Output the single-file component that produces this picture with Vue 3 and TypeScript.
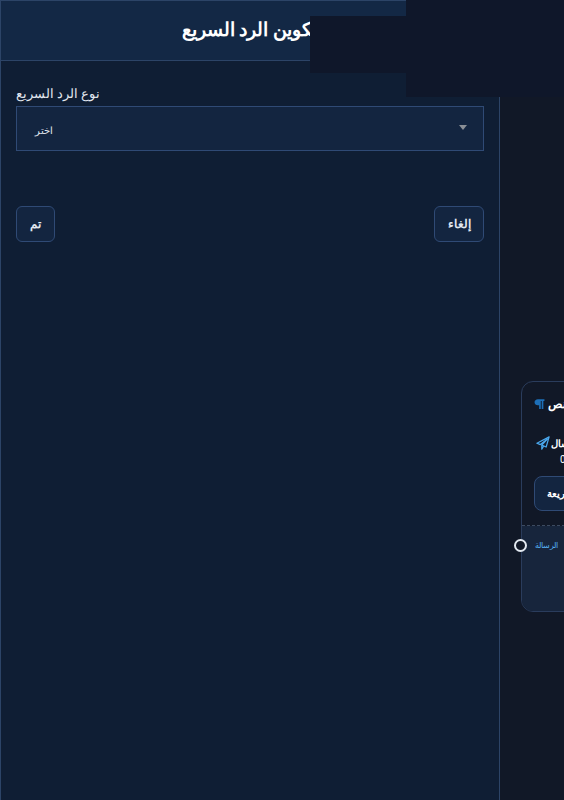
<script setup lang="ts">
const title = 'تكوين الرد السريع'
const label = 'نوع الرد السريع'
</script>

<template>
  <div class="page">
    <aside class="drawer">
      <header class="drawer-head"><h1 class="title" dir="rtl">{{ title }}</h1></header>
      <div class="drawer-body">
        <label class="field-label" dir="rtl">{{ label }}</label>
        <div class="select">
          <span class="select-value" dir="rtl">اختر</span>
          <span class="select-arrow"></span>
        </div>
        <div class="actions">
          <button class="btn btn-done" type="button">تم</button>
          <button class="btn" type="button">إلغاء</button>
        </div>
      </div>
    </aside>
    <main class="canvas">
      <section class="node">
        <div class="node-top">
          <div class="node-title">
            <svg class="icon-para" viewBox="0 0 12 12" aria-hidden="true">
              <path d="M4.2 0.8H11.4V2.6H10.2V11.4H8.4V2.6H7.4V11.4H5.6V7.4H4.2C2.2 7.4 0.6 5.9 0.6 4.1S2.2 0.8 4.2 0.8Z" fill="#1d6fb8" />
            </svg>
            <span dir="rtl">نص</span>
          </div>
          <div class="node-send">
            <svg class="icon-send" viewBox="0 0 16 16" aria-hidden="true">
              <path d="M15 1L1 8.2L5 9.8L13 3.5L6.6 10.5L11.6 12.6L15 1ZM6.6 10.5V15L8.8 11.4" fill="none" stroke="#4aa8ee" stroke-width="1.4" stroke-linejoin="round" />
            </svg>
            <span class="send-text" dir="rtl">إرسال</span>
          </div>
          <div class="node-count">0</div>
          <div class="node-quick" dir="rtl"><span>سريعة</span></div>
        </div>
        <div class="node-bottom">
          <span class="handle"></span>
          <span class="msg" dir="rtl">الرسالة</span>
        </div>
      </section>
    </main>
    <div class="shade shade-b"></div>
    <div class="shade shade-c"></div>
  </div>
</template>

<style scoped>
.page {
  position: relative;
  display: flex;
  width: 564px;
  height: 800px;
  overflow: hidden;
  background: #111827;
  color: #fff;
  font-family: Roboto, sans-serif;
}
.drawer {
  flex: 0 0 500px;
  display: flex;
  flex-direction: column;
  box-sizing: border-box;
  height: 800px;
  background: #0f1e34;
  border-left: 1px solid #2c4467;
  border-right: 1px solid #2c4467;
}
.drawer-head {
  box-sizing: border-box;
  height: 61px;
  padding-bottom: 2px;
  display: flex;
  align-items: center;
  justify-content: center;
  background: #132845;
  border-top: 1px solid #2c4467;
  border-bottom: 1px solid #2c4467;
}
.title {
  margin: 0;
  font-size: 19.4px;
  font-weight: 700;
  color: #fff;
}
.drawer-body {
  padding: 22px 15px 0;
  display: flex;
  flex-direction: column;
}
.field-label {
  align-self: flex-start;
  height: 23px;
  font-size: 12.7px;
  line-height: 21px;
  color: #e2e8f0;
}
.select {
  box-sizing: border-box;
  height: 45px;
  display: flex;
  align-items: center;
  justify-content: space-between;
  padding: 0 16px 0 18px;
  background: #132540;
  border: 1px solid #2f4a75;
}
.select-value {
  margin-top: 3px;
  font-size: 10.4px;
  color: #e2e8f0;
}
.select-arrow {
  width: 0;
  height: 0;
  margin-top: -3px;
  border-left: 4px solid transparent;
  border-right: 4px solid transparent;
  border-top: 5px solid #8a8f96;
}
.actions {
  margin-top: 55px;
  display: flex;
  justify-content: space-between;
}
.btn {
  box-sizing: border-box;
  height: 36px;
  padding: 0 12.5px;
  font-family: inherit;
  font-size: 12px;
  font-weight: 700;
  color: #e2e8f0;
  background: #132540;
  border: 1px solid #2f4a75;
  border-radius: 6px;
}
.btn-done {
  padding: 0 13px;
}
.canvas {
  position: relative;
  flex: 1;
  background: #111827;
}
.node {
  position: absolute;
  left: 21px;
  top: 381px;
  box-sizing: border-box;
  width: 240px;
  height: 231px;
  display: flex;
  flex-direction: column;
  background: #111827;
  border: 1px solid #2a3c5c;
  border-radius: 12px;
}
.node-top {
  box-sizing: border-box;
  height: 144px;
  padding: 14px 12px 0;
  border-bottom: 1px dashed #3c4a60;
}
.node-title {
  display: flex;
  align-items: center;
  gap: 3px;
  height: 16px;
  font-size: 12px;
  font-weight: 700;
}
.icon-para {
  width: 11px;
  height: 12px;
}
.node-send {
  margin-top: 23px;
  margin-left: 2px;
  display: flex;
  align-items: center;
  gap: 1px;
  height: 16px;
  font-size: 9.6px;
  font-weight: 700;
}
.icon-send {
  width: 14px;
  height: 14px;
}
.node-count {
  margin-top: 1px;
  margin-left: 26px;
  font-size: 10px;
  line-height: 16px;
  color: #fff;
}
.node-quick {
  box-sizing: border-box;
  width: 160px;
  height: 35px;
  margin-top: 8px;
  padding-left: 12px;
  display: flex;
  justify-content: flex-end;
  align-items: center;
  background: #132540;
  border: 1px solid #2f4a75;
  border-radius: 8px;
  font-size: 9.6px;
  font-weight: 700;
}
.node-bottom {
  position: relative;
  flex: 1;
  padding: 13px 12px 0;
  background: #17253c;
  border-radius: 0 0 11px 11px;
}
.msg {
  display: block;
  width: fit-content;
  margin-left: 1px;
  font-size: 8px;
  line-height: 14px;
  color: #56b0f2;
}
.handle {
  position: absolute;
  left: -8px;
  top: 13px;
  box-sizing: border-box;
  width: 13px;
  height: 13px;
  background: #111827;
  border: 2px solid #e2e8f0;
  border-radius: 50%;
}
.shade {
  position: absolute;
  background: #0f172a;
}
.shade-b {
  left: 310px;
  top: 16px;
  width: 254px;
  height: 57px;
}
.shade-c {
  left: 406px;
  top: 0;
  width: 158px;
  height: 97px;
}
</style>

<style>
html,
body {
  margin: 0;
  overflow: hidden;
}
</style>
